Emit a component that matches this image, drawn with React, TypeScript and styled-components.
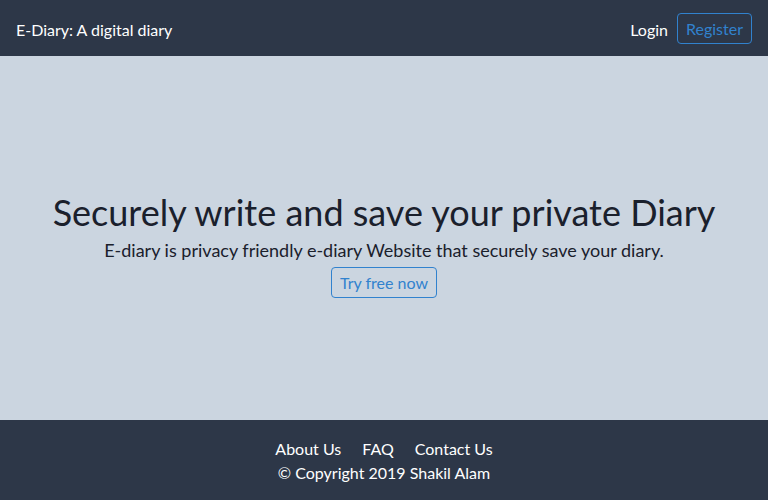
import React from "react";
import styled, { createGlobalStyle } from "styled-components";

const Global = createGlobalStyle`
  html, body { margin: 0; padding: 0; }
  body { font-family: Lato, "Noto Sans", sans-serif; background: #cbd5e0; }
  * { box-sizing: border-box; }
`;

const Page = styled.div`
  min-height: 100vh;
  display: flex;
  flex-direction: column;
`;

const NavBar = styled.nav`
  height: 56px;
  background: #2d3748;
  display: flex;
  align-items: center;
  justify-content: space-between;
  padding: 0 16px;
`;

const Brand = styled.a`
  color: #ffffff;
  font-size: 16px;
  text-decoration: none;
  padding-top: 2px;
`;

const NavRight = styled.div`
  display: flex;
  align-items: center;
  gap: 9px;
`;

const NavLink = styled.a`
  color: #ffffff;
  font-size: 16px;
  text-decoration: none;
  padding-top: 2px;
`;

const OutlineButton = styled.a`
  display: inline-flex;
  align-items: center;
  justify-content: center;
  height: 31px;
  padding: 1px 8px 0;
  border: 1px solid #3182ce;
  border-radius: 4px;
  color: #3182ce;
  font-size: 16px;
  text-decoration: none;
`;

const Main = styled.main`
  flex: 1;
  display: flex;
  flex-direction: column;
  align-items: center;
  justify-content: center;
  color: #1a202c;
  padding-top: 11px;
`;

const Title = styled.h1`
  margin: 0;
  font-size: 36px;
  font-weight: 400;
  line-height: 44px;
`;

const Lead = styled.p`
  margin: 3px 0 3px;
  font-size: 18px;
  line-height: 27px;
`;

const Footer = styled.footer`
  height: 80px;
  background: #2d3748;
  color: #ffffff;
  display: flex;
  flex-direction: column;
  align-items: center;
  justify-content: center;
  padding-top: 2px;
  font-size: 16px;
  line-height: 24px;
`;

const FooterLinks = styled.div`
  display: flex;
  gap: 21px;
`;

const FooterLink = styled.a`
  color: #ffffff;
  text-decoration: none;
`;

export default function App() {
  return (
    <>
      <Global />
      <Page>
        <NavBar>
          <Brand href="#">E-Diary: A digital diary</Brand>
          <NavRight>
            <NavLink href="#">Login</NavLink>
            <OutlineButton href="#">Register</OutlineButton>
          </NavRight>
        </NavBar>
        <Main>
          <Title>Securely write and save your private Diary</Title>
          <Lead>E-diary is privacy friendly e-diary Website that securely save your diary.</Lead>
          <OutlineButton href="#">Try free now</OutlineButton>
        </Main>
        <Footer>
          <FooterLinks>
            <FooterLink href="#">About Us</FooterLink>
            <FooterLink href="#">FAQ</FooterLink>
            <FooterLink href="#">Contact Us</FooterLink>
          </FooterLinks>
          <div>© Copyright 2019 Shakil Alam</div>
        </Footer>
      </Page>
    </>
  );
}
